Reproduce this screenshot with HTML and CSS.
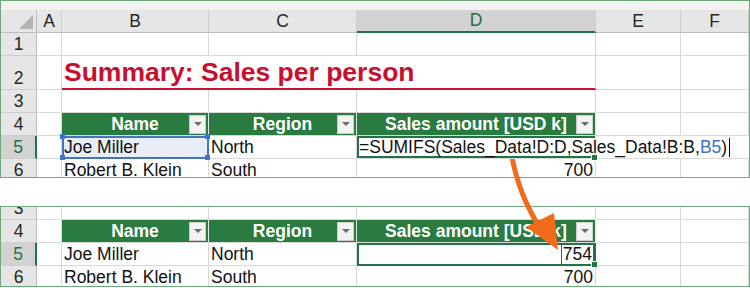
FILE: index.html
```html
<!DOCTYPE html>
<html lang="en">
<head>
  <meta charset="UTF-8">
  <title>Summary: Sales per person</title>
  <link rel="stylesheet" href="styles.css">
</head>
<body>
  <div class="sheet sheet-top">
    <div class="band"></div>

    <div class="corner"><span class="tri"></span></div>
    <div class="ch">A</div>
    <div class="ch">B</div>
    <div class="ch">C</div>
    <div class="ch sel">D</div>
    <div class="ch">E</div>
    <div class="ch">F</div>

    <div class="c rh">1</div>
    <div class="c"></div><div class="c"></div><div class="c"></div><div class="c"></div><div class="c"></div><div class="c"></div>

    <div class="c rh">2</div>
    <div class="c"></div>
    <div class="c title">Summary: Sales per person</div>
    <div class="c"></div><div class="c"></div>

    <div class="c rh">3</div>
    <div class="c"></div><div class="c"></div><div class="c"></div><div class="c"></div><div class="c"></div><div class="c"></div>

    <div class="c rh">4</div>
    <div class="c"></div>
    <div class="c th"><span class="label">Name</span><span class="dd"></span></div>
    <div class="c th"><span class="label">Region</span><span class="dd"></span></div>
    <div class="c th"><span class="label">Sales amount [USD k]</span><span class="dd"></span></div>
    <div class="c"></div><div class="c"></div>

    <div class="c rh sel">5</div>
    <div class="c"></div>
    <div class="c ref">Joe Miller<span class="h tl"></span><span class="h tr"></span><span class="h bl"></span><span class="h br"></span></div>
    <div class="c">North</div>
    <div class="c edit"><span class="formula">=SUMIFS(Sales_Data!D:D,Sales_Data!B:B,<span class="blue">B5</span>)<span class="caret"></span></span><span class="fill"></span></div>
    <div class="c covered"></div><div class="c covered"></div>

    <div class="c rh">6</div>
    <div class="c"></div>
    <div class="c">Robert B. Klein</div>
    <div class="c">South</div>
    <div class="c num">700</div>
    <div class="c"></div><div class="c"></div>
  </div>

  <div class="sheet sheet-bottom">
    <div class="c rh cut">3</div>
    <div class="c"></div><div class="c"></div><div class="c"></div><div class="c"></div><div class="c"></div><div class="c"></div>

    <div class="c rh">4</div>
    <div class="c"></div>
    <div class="c th"><span class="label">Name</span><span class="dd"></span></div>
    <div class="c th"><span class="label">Region</span><span class="dd"></span></div>
    <div class="c th"><span class="label">Sales amount [USD k]</span><span class="dd"></span></div>
    <div class="c"></div><div class="c"></div>

    <div class="c rh sel">5</div>
    <div class="c"></div>
    <div class="c">Joe Miller</div>
    <div class="c">North</div>
    <div class="c num active"><span class="val">754</span><span class="fill"></span></div>
    <div class="c"></div><div class="c"></div>

    <div class="c rh">6</div>
    <div class="c"></div>
    <div class="c">Robert B. Klein</div>
    <div class="c">South</div>
    <div class="c num">700</div>
    <div class="c"></div><div class="c"></div>
  </div>

  <svg class="arrow" width="750" height="288" viewBox="0 0 750 288">
    <path d="M512 157 Q519 195 540 228" fill="none" stroke="#f26a1b" stroke-width="5"/>
    <polygon points="526,227 554,213 558,250" fill="#f26a1b"/>
  </svg>
</body>
</html>
```

FILE: styles.css
```css
body {
  margin: 0;
  font-family: 'Liberation Sans', Arial, sans-serif;
  font-size: 17.5px;
  color: #111;
  background-color: #fff;
  position: relative;
}
.sheet {
  width: 750px;
  box-sizing: border-box;
  border: 1px solid #6fa87c;
  display: grid;
  grid-template-columns: 36px 25px 147px 148px 239px 85px 1fr;
  overflow: hidden;
}
.sheet-top {
  height: 178px;
  grid-template-rows: 9px 23px 23px 34px 23px 23px 23px 23px;
}
.sheet-bottom {
  margin-top: 28px;
  height: 81px;
  grid-template-rows: 13px 23px 23px 23px;
}
.band {
  grid-column: 1 / -1;
  background-color: #f2f2f2;
}
.corner {
  background-color: #e6e6e6;
  border-right: 1px solid #bdbdbd;
  border-bottom: 1px solid #bdbdbd;
  display: flex;
  align-items: flex-end;
  justify-content: flex-end;
  padding: 0 3px 3px 0;
}
.tri {
  width: 14px;
  height: 14px;
  background-color: #b4b4b4;
  clip-path: polygon(100% 0, 100% 100%, 0 100%);
}
.ch {
  background-color: #e6e6e6;
  border-right: 1px solid #cdcdcd;
  border-bottom: 1px solid #bdbdbd;
  display: flex;
  align-items: center;
  justify-content: center;
  color: #262626;
}
.ch.sel {
  background-color: #d2d2d2;
  color: #217346;
  border-bottom: 2px solid #217346;
}
.c {
  box-sizing: border-box;
  border-right: 1px solid #d9d9d9;
  border-bottom: 1px solid #d9d9d9;
  display: flex;
  align-items: flex-end;
  padding: 0 2px 0;
  line-height: 21px;
  white-space: nowrap;
  overflow: hidden;
  min-width: 0;
}
.rh {
  background-color: #e6e6e6;
  border-right: 1px solid #bdbdbd;
  border-bottom: 1px solid #cdcdcd;
  justify-content: center;
  padding: 0;
  color: #262626;
}
.rh.sel {
  background-color: #d2d2d2;
  color: #217346;
  border-right: 2px solid #217346;
}
.title {
  grid-column: 3 / 6;
  color: #c8102e;
  font-weight: bold;
  font-size: 26.5px;
  line-height: 30px;
  border-bottom: 2px solid #c8102e;
  padding-bottom: 1px;
}
.th {
  background-color: #2a7b3f;
  color: #fff;
  font-weight: bold;
  align-items: center;
  padding: 0 2px 0 0;
  border-right-color: #e6e6e6;
}
.th .label {
  flex: 1;
  text-align: center;
  padding-left: 19px;
}
.dd {
  width: 17px;
  height: 19px;
  box-sizing: border-box;
  background-color: #f3f3f3;
  border: 1px solid #cdcdcd;
  display: flex;
  align-items: center;
  justify-content: center;
}
.dd::after {
  content: "";
  border-left: 4px solid transparent;
  border-right: 4px solid transparent;
  border-top: 4px solid #6b6b6b;
}
.num {
  justify-content: flex-end;
}
.ref {
  position: relative;
  overflow: visible;
  background-color: #e8eef8;
  outline: 2px solid #4472c4;
  outline-offset: -2px;
}
.h {
  position: absolute;
  width: 5px;
  height: 5px;
  background-color: #4472c4;
}
.tl { left: -2px; top: -2px; }
.tr { right: -2px; top: -2px; }
.bl { left: -2px; bottom: -2px; }
.br { right: -2px; bottom: -2px; }
.active {
  position: relative;
  overflow: visible;
  outline: 2px solid #217346;
  outline-offset: -2px;
}
.edit {
  position: relative;
  overflow: visible;
  z-index: 1;
  box-shadow: inset 2px 0 #217346, inset 0 2px #217346, inset 0 -2px #217346;
}
.covered {
  border-right-color: transparent;
}
.blue {
  color: #3f6fc6;
}
.caret {
  display: inline-block;
  width: 1px;
  height: 19px;
  margin-left: 2px;
  vertical-align: -4px;
  background-color: #000;
}
.fill {
  position: absolute;
  right: -3px;
  bottom: -3px;
  width: 5px;
  height: 5px;
  background-color: #217346;
  border: 1px solid #fff;
}
.val {
  outline: 1px solid #555;
  padding: 0 1px;
}
.arrow {
  position: absolute;
  left: 0;
  top: 0;
  pointer-events: none;
}
```
